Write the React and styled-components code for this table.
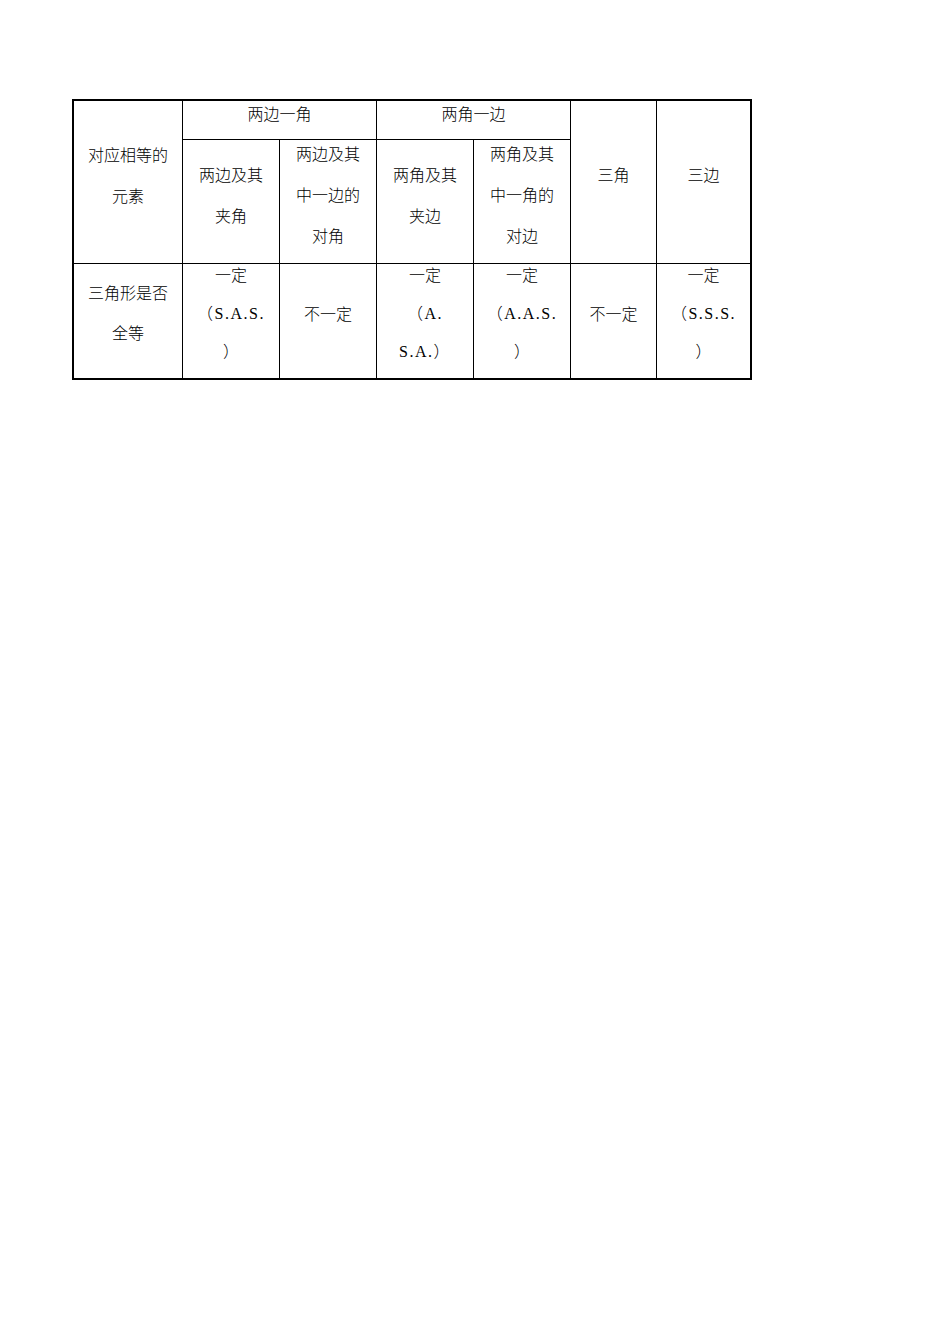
import styled, { createGlobalStyle } from 'styled-components';

const GlobalStyle = createGlobalStyle`
  html, body {
    margin: 0;
    padding: 0;
    background: #ffffff;
  }
  body {
    font-family: "Liberation Serif", "Noto Sans CJK SC", serif;
    color: #000000;
  }
`;

const Page = styled.div`
  padding: 99px 0 0 72px;
  min-height: 1344px;
  box-sizing: border-box;
`;

const Grid = styled.div`
  display: grid;
  width: max-content;
  grid-template-columns: 108px 96px 96px 96px 96px 85px 93px;
  grid-template-rows: 38px 123px 114px;
  gap: 1px;
  background: #000000;
  border: 2px solid #000000;
`;

const Cell = styled.div`
  grid-column: ${props => props.col || 'auto'};
  grid-row: ${props => props.row || 'auto'};
  background: #ffffff;
  display: flex;
  flex-direction: column;
  align-items: center;
  justify-content: center;
  padding-bottom: ${props => props.lift || 12}px;
  font-size: 16px;
  font-weight: 300;
  text-align: center;
  white-space: nowrap;
`;

const Line = styled.div`
  height: ${props => props.lh || 40}px;
  line-height: ${props => props.lh || 40}px;
  letter-spacing: ${props => (props.latin ? '1.5px' : '0')};
`;

const Text = ({ lines, lh }) => (
  <>
    {lines.map((t, i) => (
      <Line key={i} lh={lh} latin={/[A-Z]/.test(t)}>{t}</Line>
    ))}
  </>
);

export default function App() {
  return (
    <>
      <GlobalStyle />
      <Page>
        <Grid>
          <Cell col="1" row="1 / 3">
            <Text lines={['对应相等的', '元素']} lh={41} />
          </Cell>
          <Cell col="2 / 4" row="1" lift={11}>
            <Text lines={['两边一角']} />
          </Cell>
          <Cell col="4 / 6" row="1" lift={11}>
            <Text lines={['两角一边']} />
          </Cell>
          <Cell col="6" row="1 / 3">
            <Text lines={['三角']} />
          </Cell>
          <Cell col="7" row="1 / 3">
            <Text lines={['三边']} />
          </Cell>

          <Cell col="2" row="2">
            <Text lines={['两边及其', '夹角']} lh={41} />
          </Cell>
          <Cell col="3" row="2">
            <Text lines={['两边及其', '中一边的', '对角']} lh={41} />
          </Cell>
          <Cell col="4" row="2">
            <Text lines={['两角及其', '夹边']} lh={41} />
          </Cell>
          <Cell col="5" row="2">
            <Text lines={['两角及其', '中一角的', '对边']} lh={41} />
          </Cell>

          <Cell row="3" lift={15}>
            <Text lines={['三角形是否', '全等']} />
          </Cell>
          <Cell row="3" lift={15}>
            <Text lines={['一定', '（S.A.S.', '）']} lh={38} />
          </Cell>
          <Cell row="3" lift={13}>
            <Text lines={['不一定']} />
          </Cell>
          <Cell row="3" lift={15}>
            <Text lines={['一定', '（A.', 'S.A.）']} lh={38} />
          </Cell>
          <Cell row="3" lift={15}>
            <Text lines={['一定', '（A.A.S.', '）']} lh={38} />
          </Cell>
          <Cell row="3" lift={13}>
            <Text lines={['不一定']} />
          </Cell>
          <Cell row="3" lift={15}>
            <Text lines={['一定', '（S.S.S.', '）']} lh={38} />
          </Cell>
        </Grid>
      </Page>
    </>
  );
}
